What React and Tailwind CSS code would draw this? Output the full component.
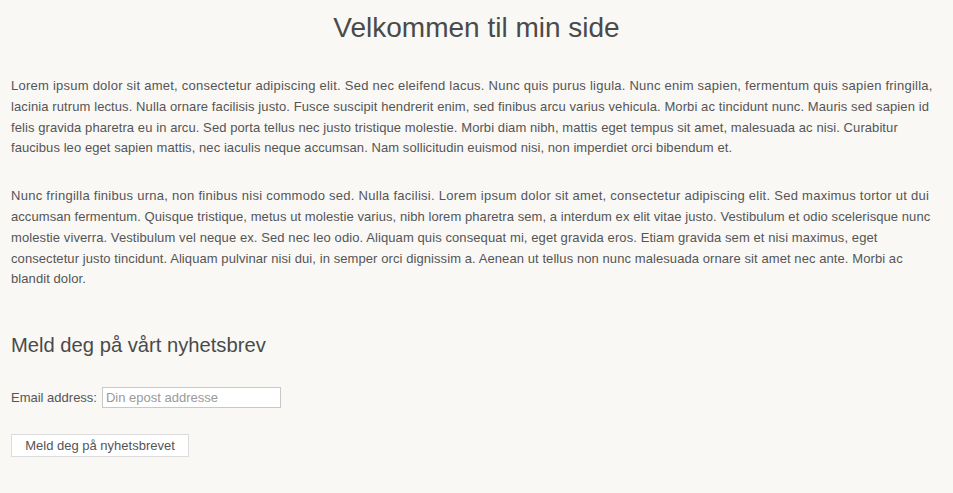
import React from 'react';

// Linjene brytes slik som i originalen (med litt justert sperring per linje)
const intro = [
  ['Lorem ipsum dolor sit amet, consectetur adipiscing elit. Sed nec eleifend lacus. Nunc quis purus ligula. Nunc enim sapien, fermentum quis sapien fringilla,', 'tracking-[0.24px]'],
  ['lacinia rutrum lectus. Nulla ornare facilisis justo. Fusce suscipit hendrerit enim, sed finibus arcu varius vehicula. Morbi ac tincidunt nunc. Mauris sed sapien id', 'tracking-[0.1px]'],
  ['felis gravida pharetra eu in arcu. Sed porta tellus nec justo tristique molestie. Morbi diam nibh, mattis eget tempus sit amet, malesuada ac nisi. Curabitur', 'tracking-[0.08px]'],
  ['faucibus leo eget sapien mattis, nec iaculis neque accumsan. Nam sollicitudin euismod nisi, non imperdiet orci bibendum et.', 'tracking-[0.07px]'],
];

const more = [
  ['Nunc fringilla finibus urna, non finibus nisi commodo sed. Nulla facilisi. Lorem ipsum dolor sit amet, consectetur adipiscing elit. Sed maximus tortor ut dui', 'tracking-[0.27px]'],
  ['accumsan fermentum. Quisque tristique, metus ut molestie varius, nibh lorem pharetra sem, a interdum ex elit vitae justo. Vestibulum et odio scelerisque nunc', 'tracking-[0.07px]'],
  ['molestie viverra. Vestibulum vel neque ex. Sed nec leo odio. Aliquam quis consequat mi, eget gravida eros. Etiam gravida sem et nisi maximus, eget', 'tracking-[0.09px]'],
  ['consectetur justo tincidunt. Aliquam pulvinar nisi dui, in semper orci dignissim a. Aenean ut tellus non nunc malesuada ornare sit amet nec ante. Morbi ac', 'tracking-[0.08px]'],
  ['blandit dolor.', 'tracking-[0.08px]'],
];

const Paragraph = ({ lines, className = '' }) => (
  <p className={`text-[13px] leading-[20.8px] ${className}`}>
    {lines.map(([line, track], i) => (
      <span key={i} className={`block whitespace-nowrap ${track}`}>
        {line}
      </span>
    ))}
  </p>
);

const App = () => {
  return (
    <div className="min-h-[493px] bg-[#f9f8f5] px-[11px] pt-[11px] pb-8 text-[#555] font-['Liberation_Sans',Arial,sans-serif]">
      {/* Overskrift */}
      <h1 className="text-center text-[28px] leading-[34px] text-[#4a4a4a] mb-[31px]">
        Velkommen til min side
      </h1>

      {/* Tekst */}
      <Paragraph lines={intro} className="mb-[27px]" />
      <Paragraph lines={more} />

      {/* Nyhetsbrev */}
      <h2 className="mt-[43px] text-[20.2px] leading-[24px] text-[#4a4a4a]">
        Meld deg på vårt nyhetsbrev
      </h2>
      <form className="mt-[30px]" onSubmit={(e) => e.preventDefault()}>
        <div className="flex items-center text-[13px]">
          <label htmlFor="email" className="mr-[5px]">Email address:</label>
          <input
            id="email"
            type="email"
            placeholder="Din epost addresse"
            className="w-[179px] h-[21px] bg-white border border-[#c8c8c8] px-[3px] text-[13px] placeholder:text-[#9a9a9a] outline-none"
          />
        </div>
        <button
          type="submit"
          className="mt-[26px] w-[178px] h-[23px] bg-white border border-[#dcdcdc] text-[13px] text-[#555]"
        >
          Meld deg på nyhetsbrevet
        </button>
      </form>
    </div>
  );
};

export default App;
